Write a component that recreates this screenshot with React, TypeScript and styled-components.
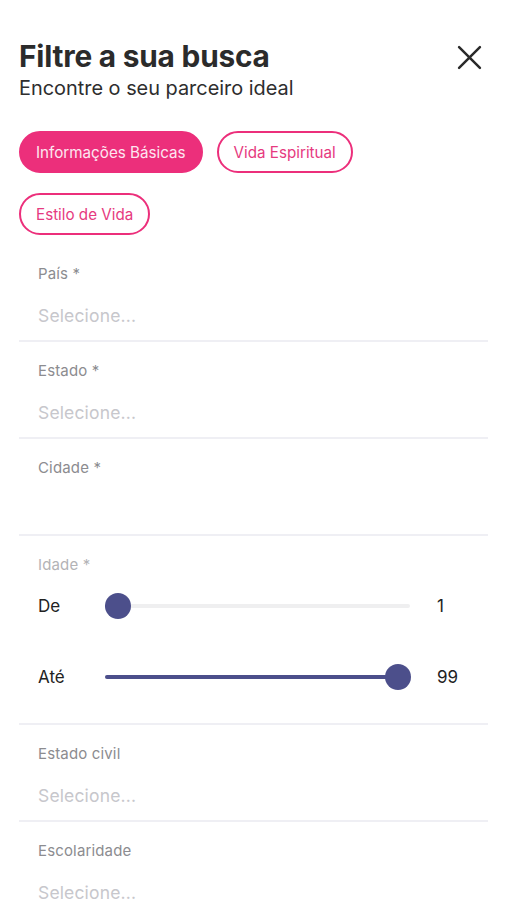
import React from "react";
import styled, { createGlobalStyle } from "styled-components";

const Global = createGlobalStyle`
  html, body { margin: 0; padding: 0; background: #ffffff; }
  body { font-family: Inter, "Noto Sans", sans-serif; -webkit-font-smoothing: antialiased; }
  * { box-sizing: border-box; }
`;

const Page = styled.div`
  width: 507px;
  height: 900px;
  overflow: hidden;
  padding: 39px 19px 0 19px;
  background: #fff;
`;

const Header = styled.header`
  display: flex;
  justify-content: space-between;
  align-items: flex-start;
`;

const Titles = styled.div`
  display: flex;
  flex-direction: column;
`;

const Title = styled.h1`
  margin: 0;
  font-size: 29.8px;
  line-height: 34px;
  font-weight: 700;
  color: #2b2b2b;
  letter-spacing: -0.2px;
`;

const Subtitle = styled.p`
  margin: 3px 0 0 0;
  font-size: 19.9px;
  line-height: 24px;
  font-weight: 400;
  color: #2e2e2e;
`;

const CloseButton = styled.button`
  border: 0;
  background: none;
  padding: 0;
  margin: 5px 6px 0 0;
  width: 26px;
  height: 26px;
  display: flex;
  align-items: center;
  justify-content: center;
  cursor: pointer;
`;

const Pills = styled.div`
  display: flex;
  flex-wrap: wrap;
  column-gap: 14px;
  row-gap: 20px;
  margin-top: 31px;
  padding-right: 120px;
`;

const Pill = styled.button<{ $active?: boolean }>`
  height: 42px;
  padding: 0 15px;
  border-radius: 21px;
  border: 2px solid #ec2f7b;
  background: ${(p) => (p.$active ? "#ec2f7b" : "#fff")};
  color: ${(p) => (p.$active ? "#fde6f0" : "#e63a80")};
  font-family: Inter, "Noto Sans", sans-serif;
  font-size: 15.2px;
  font-weight: 400;
  display: flex;
  align-items: center;
  white-space: nowrap;
`;

const Form = styled.div`
  margin-top: 10px;
  display: flex;
  flex-direction: column;
`;

const Field = styled.div<{ $height?: number }>`
  height: ${(p) => p.$height ?? 97}px;
  border-bottom: 2px solid #efeff4;
  padding: 19px 0 0 19px;
  display: flex;
  flex-direction: column;
`;

const Label = styled.div<{ $muted?: boolean }>`
  font-size: 15px;
  line-height: 20px;
  letter-spacing: 0.15px;
  color: ${(p) => (p.$muted ? "#b3b3b6" : "#8c8c90")};
`;

const Placeholder = styled.div`
  margin-top: 21px;
  font-size: 17.5px;
  line-height: 22px;
  letter-spacing: 0.15px;
  color: #c7c7cc;
`;

const SliderRow = styled.div<{ $top: number }>`
  display: grid;
  grid-template-columns: 67px 305px 1fr;
  align-items: center;
  height: 30px;
  margin-top: ${(p) => p.$top}px;
`;

const RowLabel = styled.span`
  font-size: 17px;
  color: #222;
`;

const RowValue = styled.span`
  font-size: 17px;
  color: #222;
  padding-left: 27px;
`;

const Track = styled.div`
  position: relative;
  height: 4px;
  border-radius: 2px;
  background: #efeff0;
`;

const Fill = styled.div`
  position: absolute;
  left: 0;
  top: 0;
  bottom: 0;
  border-radius: 2px;
  background: #4c4f8b;
`;

const Thumb = styled.div`
  position: absolute;
  top: 50%;
  width: 26px;
  height: 26px;
  margin-left: -13px;
  margin-top: -13px;
  border-radius: 50%;
  background: #4c4f8b;
`;

function Slider({ pos }: { pos: number }) {
  return (
    <Track>
      <Fill style={{ width: `${pos}px` }} />
      <Thumb style={{ left: `${pos}px` }} />
    </Track>
  );
}

function SelectField({ label }: { label: string }) {
  return (
    <Field>
      <Label>{label}</Label>
      <Placeholder>Selecione...</Placeholder>
    </Field>
  );
}

export default function App() {
  return (
    <>
      <Global />
      <Page>
        <Header>
          <Titles>
            <Title>Filtre a sua busca</Title>
            <Subtitle>Encontre o seu parceiro ideal</Subtitle>
          </Titles>
          <CloseButton aria-label="Fechar">
            <svg width="25" height="25" viewBox="0 0 24 24" fill="none" stroke="#2a2a2a" strokeWidth="2.4" strokeLinecap="round">
              <path d="M2 2 L22 22 M22 2 L2 22" />
            </svg>
          </CloseButton>
        </Header>
        <Pills>
          <Pill $active>Informações Básicas</Pill>
          <Pill>Vida Espiritual</Pill>
          <Pill>Estilo de Vida</Pill>
        </Pills>
        <Form>
          <SelectField label="País *" />
          <SelectField label="Estado *" />
          <Field>
            <Label>Cidade *</Label>
          </Field>
          <Field $height={189}>
            <Label $muted>Idade *</Label>
            <SliderRow $top={16}>
              <RowLabel>De</RowLabel>
              <Slider pos={13} />
              <RowValue>1</RowValue>
            </SliderRow>
            <SliderRow $top={41}>
              <RowLabel>Até</RowLabel>
              <Slider pos={293} />
              <RowValue>99</RowValue>
            </SliderRow>
          </Field>
          <SelectField label="Estado civil" />
          <SelectField label="Escolaridade" />
        </Form>
      </Page>
    </>
  );
}
